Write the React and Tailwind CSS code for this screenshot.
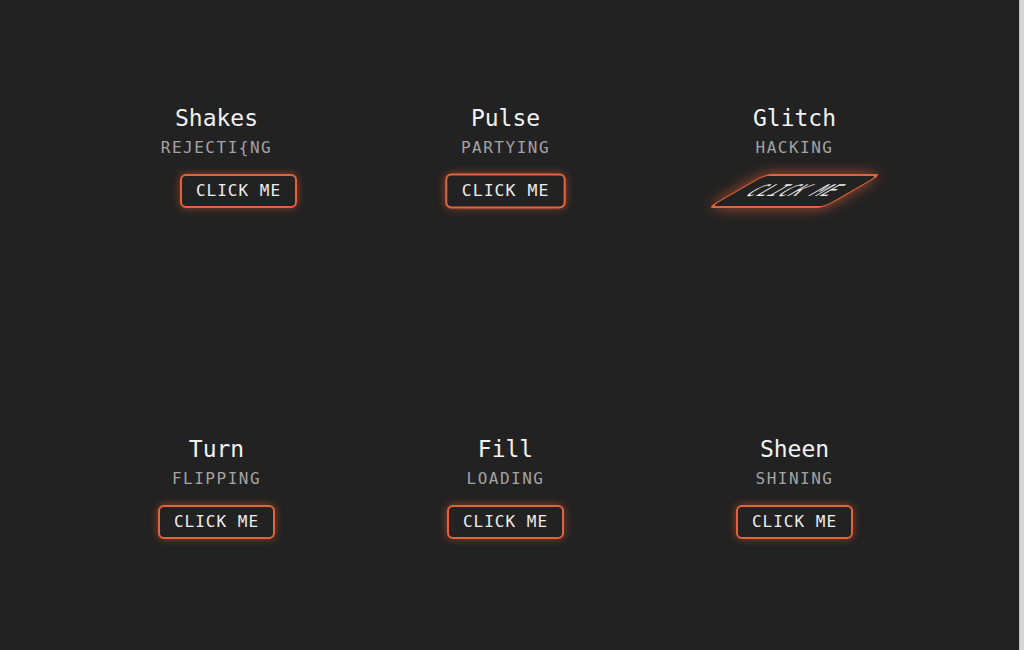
import React from 'react'

const buttons = [
  { title: 'Shakes', label: 'REJECTI{NG', fx: 'translate-x-[22px]' },
  { title: 'Pulse', label: 'PARTYING', fx: 'scale-[1.03]' },
  { title: 'Glitch', label: 'HACKING', fx: 'skew-x-[-60deg] shadow-[0_0_10px_rgba(230,95,55,0.7)]' },
  { title: 'Turn', label: 'FLIPPING', fx: '' },
  { title: 'Fill', label: 'LOADING', fx: '' },
  { title: 'Sheen', label: 'SHINING', fx: '' },
]

const mono = { fontFamily: '"DejaVu Sans Mono", "Liberation Mono", monospace' }

const App = () => {
  return (
    <div className="flex h-[650px] w-[1024px] overflow-hidden bg-[#222222]" style={mono}>
      <div className="flex-1 pl-[72px] pt-[104px]">
        <div className="grid grid-cols-[repeat(3,289px)] gap-y-[227px]">
          {buttons.map((b) => (
            <div key={b.title} className="flex flex-col items-center">
              <h2 className="text-[23px] leading-[28px] font-medium text-[#f2f2f2]">{b.title}</h2>
              <p className="mt-[6px] text-[16px] leading-[20px] tracking-[1.5px] text-[#a3a3a3]">
                {b.label}
              </p>
              <button
                className={`mt-[16px] rounded-md border-2 border-[#e5633a] bg-[#222222] px-[14px] py-[5px] text-[16px] leading-[20px] tracking-[1px] text-[#ededed] shadow-[0_0_8px_rgba(230,95,55,0.55)] ${b.fx}`}
              >
                CLICK ME
              </button>
            </div>
          ))}
        </div>
      </div>
      <div className="w-[5px] border-l border-[#bdbdbd] bg-[#d6d6d6]" />
    </div>
  )
}

export default App
